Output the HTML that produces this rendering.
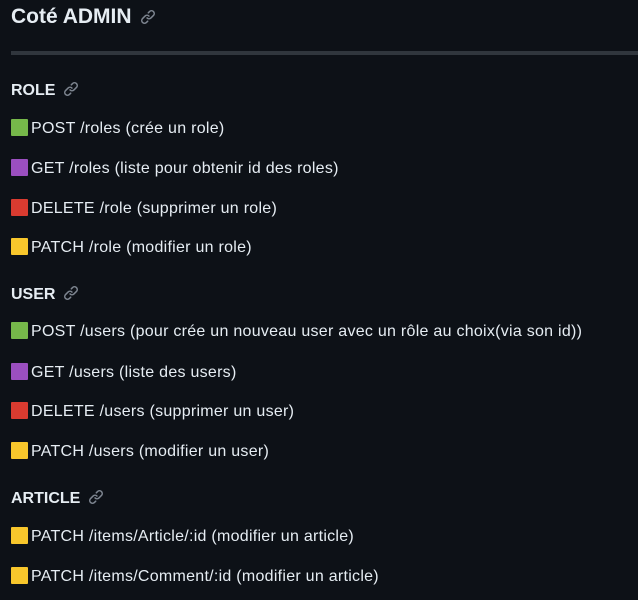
<!DOCTYPE html>
<html><head><meta charset="utf-8"><style>
body{margin:0;background:#0d1117;color:#e6edf3;font-family:"Liberation Sans","DejaVu Sans",sans-serif;width:638px;height:600px;overflow:hidden}
h2{font-size:21px;font-weight:bold;margin:0;position:absolute;top:3px;left:11px;line-height:28px}
.hr{position:absolute;left:11px;right:0;top:51px;height:4px;background:#30363d}
h3{font-size:16px;font-weight:bold;margin:0;position:absolute;left:11px;line-height:24px}
p{margin:0;position:absolute;left:11px;font-size:16px;line-height:24px;white-space:nowrap;letter-spacing:0.27px}
.s{display:inline-block;width:17px;height:17px;vertical-align:-3px;margin-right:3px;border-radius:1px}
.g{background:#76b84a}.pu{background:#9b4fc0}.r{background:#d93b30}.y{background:#f8c72c}
svg{vertical-align:-2px;margin-left:8px}
</style></head><body>
<h2>Coté ADMIN<svg width="16" height="16" viewBox="0 0 16 16"><path fill="#7d8590" d="m7.775 3.275 1.25-1.25a3.5 3.5 0 1 1 4.95 4.95l-2.5 2.5a3.5 3.5 0 0 1-4.95 0 .751.751 0 0 1 .018-1.042.751.751 0 0 1 1.042-.018 1.998 1.998 0 0 0 2.83 0l2.5-2.5a2.002 2.002 0 0 0-2.83-2.83l-1.25 1.25a.751.751 0 0 1-1.042-.018.751.751 0 0 1-.018-1.042Zm-4.69 9.64a1.998 1.998 0 0 0 2.83 0l1.25-1.25a.751.751 0 0 1 1.042.018.751.751 0 0 1 .018 1.042l-1.25 1.25a3.5 3.5 0 1 1-4.95-4.95l2.5-2.5a3.5 3.5 0 0 1 4.95 0 .751.751 0 0 1-.018 1.042.751.751 0 0 1-1.042.018 1.998 1.998 0 0 0-2.83 0l-2.5 2.5a1.998 1.998 0 0 0 0 2.83Z"/></svg></h2>
<div class="hr"></div>
<h3 style="top:79px">ROLE<svg width="16" height="16" viewBox="0 0 16 16"><path fill="#7d8590" d="m7.775 3.275 1.25-1.25a3.5 3.5 0 1 1 4.95 4.95l-2.5 2.5a3.5 3.5 0 0 1-4.95 0 .751.751 0 0 1 .018-1.042.751.751 0 0 1 1.042-.018 1.998 1.998 0 0 0 2.83 0l2.5-2.5a2.002 2.002 0 0 0-2.83-2.83l-1.25 1.25a.751.751 0 0 1-1.042-.018.751.751 0 0 1-.018-1.042Zm-4.69 9.64a1.998 1.998 0 0 0 2.83 0l1.25-1.25a.751.751 0 0 1 1.042.018.751.751 0 0 1 .018 1.042l-1.25 1.25a3.5 3.5 0 1 1-4.95-4.95l2.5-2.5a3.5 3.5 0 0 1 4.95 0 .751.751 0 0 1-.018 1.042.751.751 0 0 1-1.042.018 1.998 1.998 0 0 0-2.83 0l-2.5 2.5a1.998 1.998 0 0 0 0 2.83Z"/></svg></h3>
<p style="top:117px"><span class="s g"></span>POST /roles (crée un role)</p>
<p style="top:157px"><span class="s pu"></span>GET /roles (liste pour obtenir id des roles)</p>
<p style="top:197px"><span class="s r"></span>DELETE /role (supprimer un role)</p>
<p style="top:236px"><span class="s y"></span>PATCH /role (modifier un role)</p>
<h3 style="top:283px">USER<svg width="16" height="16" viewBox="0 0 16 16"><path fill="#7d8590" d="m7.775 3.275 1.25-1.25a3.5 3.5 0 1 1 4.95 4.95l-2.5 2.5a3.5 3.5 0 0 1-4.95 0 .751.751 0 0 1 .018-1.042.751.751 0 0 1 1.042-.018 1.998 1.998 0 0 0 2.83 0l2.5-2.5a2.002 2.002 0 0 0-2.83-2.830l-1.25 1.25a.751.751 0 0 1-1.042-.018.751.751 0 0 1-.018-1.042Zm-4.69 9.64a1.998 1.998 0 0 0 2.83 0l1.25-1.25a.751.751 0 0 1 1.042.018.751.751 0 0 1 .018 1.042l-1.25 1.25a3.5 3.5 0 1 1-4.95-4.95l2.5-2.5a3.5 3.5 0 0 1 4.95 0 .751.751 0 0 1-.018 1.042.751.751 0 0 1-1.042.018 1.998 1.998 0 0 0-2.83 0l-2.5 2.5a1.998 1.998 0 0 0 0 2.83Z"/></svg></h3>
<p style="top:320px"><span class="s g"></span>POST /users (pour crée un nouveau user avec un rôle au choix(via son id))</p>
<p style="top:361px"><span class="s pu"></span>GET /users (liste des users)</p>
<p style="top:400px"><span class="s r"></span>DELETE /users (supprimer un user)</p>
<p style="top:440px"><span class="s y"></span>PATCH /users (modifier un user)</p>
<h3 style="top:487px">ARTICLE<svg width="16" height="16" viewBox="0 0 16 16"><path fill="#7d8590" d="m7.775 3.275 1.25-1.25a3.5 3.5 0 1 1 4.95 4.95l-2.5 2.5a3.5 3.5 0 0 1-4.95 0 .751.751 0 0 1 .018-1.042.751.751 0 0 1 1.042-.018 1.998 1.998 0 0 0 2.83 0l2.5-2.5a2.002 2.002 0 0 0-2.83-2.83l-1.25 1.25a.751.751 0 0 1-1.042-.018.751.751 0 0 1-.018-1.042Zm-4.69 9.64a1.998 1.998 0 0 0 2.83 0l1.25-1.25a.751.751 0 0 1 1.042.018.751.751 0 0 1 .018 1.042l-1.25 1.25a3.5 3.5 0 1 1-4.95-4.95l2.5-2.5a3.5 3.5 0 0 1 4.95 0 .751.751 0 0 1-.018 1.042.751.751 0 0 1-1.042.018 1.998 1.998 0 0 0-2.83 0l-2.5 2.5a1.998 1.998 0 0 0 0 2.83Z"/></svg></h3>
<p style="top:525px"><span class="s y"></span>PATCH /items/Article/:id (modifier un article)</p>
<p style="top:565px"><span class="s y"></span>PATCH /items/Comment/:id (modifier un article)</p>
</body></html>
